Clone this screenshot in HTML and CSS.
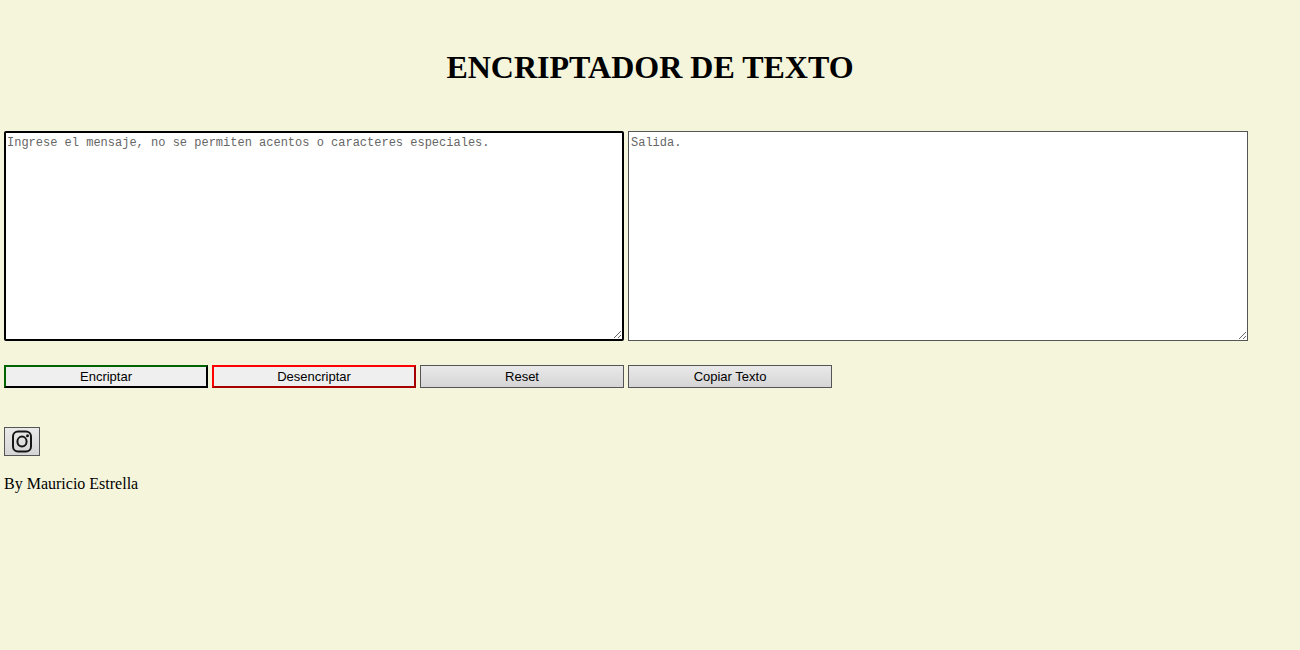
FILE: index.html
```html
<!DOCTYPE html>
<html lang="es">
<head>
<meta charset="utf-8">
<title>Encriptador de texto</title>
<link rel="stylesheet" href="styles.css">
</head>
<body>
<header><h1 class="title">ENCRIPTADOR DE TEXTO</h1></header>
<main class="tool">
  <textarea class="message message-input" aria-label="Mensaje" placeholder="Ingrese el mensaje, no se permiten acentos o caracteres especiales."></textarea>
  <textarea class="message" aria-label="Salida" placeholder="Salida."></textarea>
  <button type="button" class="button encrypt">Encriptar</button>
  <button type="button" class="button decrypt">Desencriptar</button>
  <button type="button" class="button">Reset</button>
  <button type="button" class="button">Copiar Texto</button>
</main>
<footer class="footer">
  <button type="button" class="social" aria-label="Instagram">
    <svg class="social-icon" viewBox="0 0 22 24" preserveAspectRatio="none" fill="none" stroke="#151515" stroke-width="2">
      <rect x="2" y="1.5" width="18" height="20" rx="5"/>
      <ellipse cx="11" cy="11.6" rx="4.6" ry="5"/>
      <circle cx="16.5" cy="5.8" r="1.5" fill="#151515" stroke="none"/>
    </svg>
  </button>
  <p class="author">By Mauricio Estrella</p>
</footer>
</body>
</html>
```
FILE: styles.css
```css
body {
  margin: 0;
  padding: 47px 4px 0;
  background: #f5f5dc;
  color: #000;
  font: 16px/20px "Liberation Serif", serif;
}

.title {
  margin: 0 0 44px;
  font-size: 32px;
  line-height: 40px;
  text-align: center;
}

.tool {
  display: grid;
  grid-template-columns: repeat(6, 1fr);
  column-gap: 4px;
  row-gap: 24px;
  margin-right: 48px;
}

.message {
  grid-column: span 3;
  box-sizing: border-box;
  height: 210px;
  margin: 0;
  padding: 4px 2px;
  border: 1px solid #555;
  border-radius: 0;
  background: #fff;
  font: 12px/15px "Liberation Mono", monospace;
  resize: both;
}

.message::placeholder {
  color: #666;
}

.message-input {
  padding: 3px 1px;
  border: 2px solid #000;
  border-radius: 2px;
}

.button {
  height: 23px;
  padding: 0;
  border: 1px solid #555;
  border-radius: 0;
  background: linear-gradient(#e9e9e9, #d5d5d5);
  color: #000;
  font: 13px/16px "Liberation Sans", sans-serif;
}

.encrypt {
  border: 2px solid;
  border-color: #006400 #000 #000 #006400;
  background: #efefef;
}

.decrypt {
  border: 2px solid;
  border-color: #f00 #a50000 #a50000 #f00;
  background: #efefef;
}

.footer {
  padding-top: 39px;
}

.social {
  display: flex;
  align-items: center;
  justify-content: center;
  width: 36px;
  height: 29px;
  padding: 0;
  border: 1px solid #555;
  border-radius: 0;
  background: linear-gradient(#e9e9e9, #d5d5d5);
}

.social-icon {
  width: 22px;
  height: 24px;
}

.author {
  margin: 18px 0 0;
}
```
